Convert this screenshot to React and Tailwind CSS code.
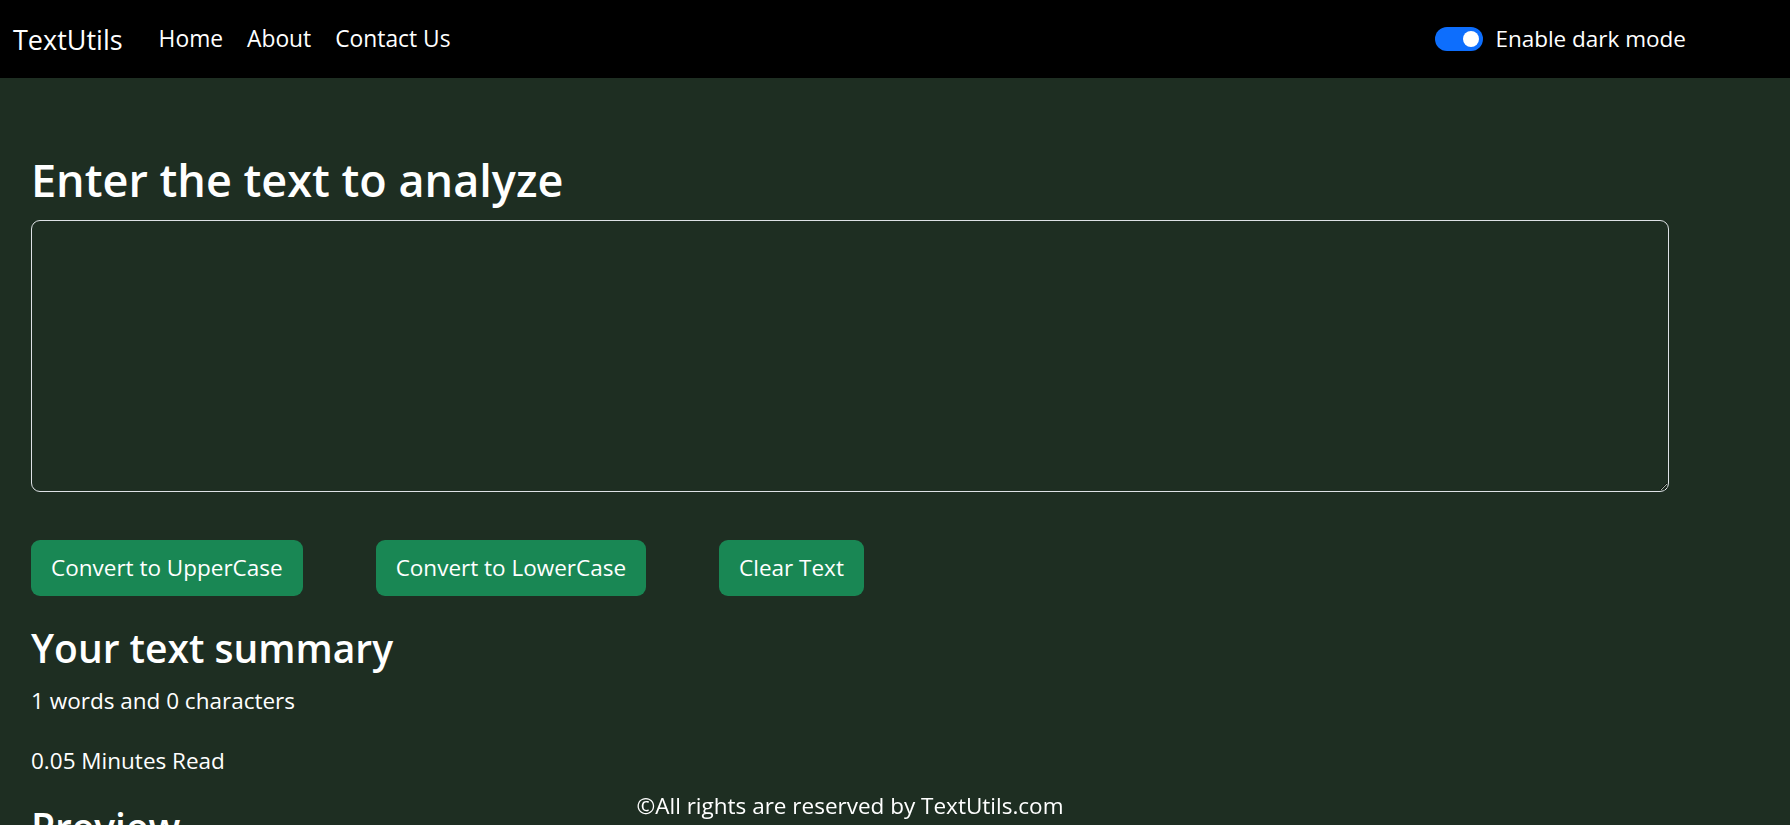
import React, { useState } from 'react';

const App = () => {
    const [text, setText] = useState('');
    const [dark, setDark] = useState(true);

    const words = text.split(' ').length;
    const chars = text.length;

    return (
        <div className="min-h-screen bg-[#1e2e22] text-white font-['Open_Sans','Noto_Sans',sans-serif]">
            {/* Navbar */}
            <nav className="h-[78px] bg-black flex items-center pl-[13px] pr-[104px]">
                <span className="text-[27px] leading-none mr-[24px]">TextUtils</span>
                <ul className="flex items-center text-[22.8px]">
                    <li className="px-[12px]">Home</li>
                    <li className="px-[12px]">About</li>
                    <li className="px-[12px]">Contact Us</li>
                </ul>
                <div className="ml-auto flex items-center gap-[12px]">
                    <button
                        onClick={() => setDark(!dark)}
                        className={`w-[48px] h-[24px] rounded-full flex items-center px-[4px] ${dark ? 'bg-[#0d6efd] justify-end' : 'bg-white justify-start'}`}
                    >
                        <span className={`w-[16px] h-[16px] rounded-full ${dark ? 'bg-white' : 'bg-gray-400'}`}></span>
                    </button>
                    <span className="text-[22.5px]">Enable dark mode</span>
                </div>
            </nav>

            {/* Text form */}
            <div className="px-[31px] pt-[75px]">
                <h2 className="text-[45px] font-semibold leading-[54px] mb-[13px]">Enter the text to analyze</h2>
                <textarea
                    value={text}
                    onChange={(e) => setText(e.target.value)}
                    className="block w-[1638px] h-[272px] bg-transparent border border-[#dee2e6] rounded-[9px] text-[22.5px] px-[18px] py-[9px] outline-none"
                ></textarea>
                <div className="flex gap-[73px] mt-[48px]">
                    <button className="bg-[#198754] rounded-[9px] text-[22.5px] leading-[36px] px-[20px] py-[10px]">Convert to UpperCase</button>
                    <button className="bg-[#198754] rounded-[9px] text-[22.5px] leading-[36px] px-[20px] py-[10px]">Convert to LowerCase</button>
                    <button className="bg-[#198754] rounded-[9px] text-[22.5px] leading-[36px] px-[20px] py-[10px]" onClick={() => setText('')}>Clear Text</button>
                </div>
            </div>

            {/* Summary */}
            <div className="px-[31px] pt-[28px]">
                <h2 className="text-[39px] font-semibold leading-[47px] mb-[12px]">Your text summary</h2>
                <p className="text-[22.5px] leading-[36px] mb-[24px]">{words} words and {chars} characters</p>
                <p className="text-[22.5px] leading-[36px] mb-[24px]">{0.008 * words * 6.25} Minutes Read</p>
                <h2 className="text-[39px] font-semibold leading-[47px] mt-[13px] mb-[12px]">Preview</h2>
                <p className="text-[22.5px] leading-[36px]">{text.length > 0 ? text : 'Enter something to preview it here'}</p>
            </div>

            {/* Footer */}
            <footer className="fixed bottom-0 left-0 w-[1700px] text-center text-[22.5px] leading-[36px] pb-[1px]">
                ©All rights are reserved by TextUtils.com
            </footer>
        </div>
    );
};

export default App;
